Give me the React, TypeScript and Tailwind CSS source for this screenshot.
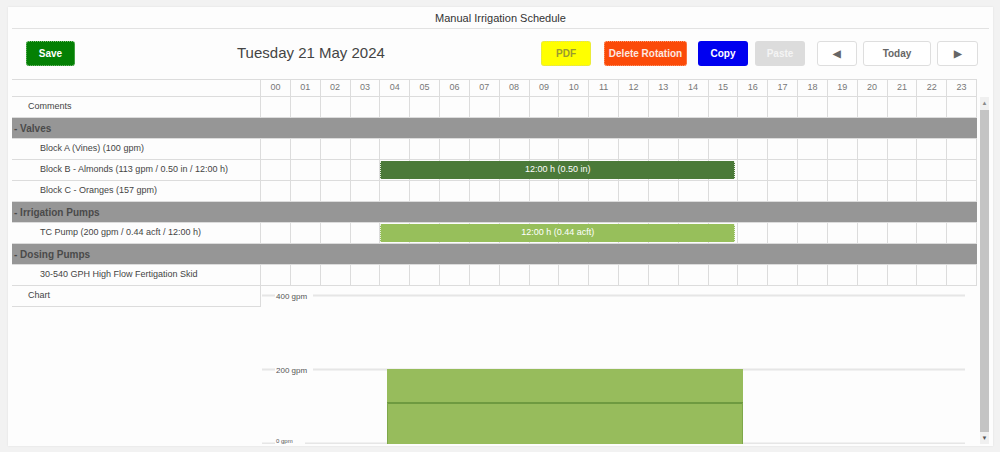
import React from "react";

type Row =
  | { kind: "group"; label: string }
  | { kind: "item"; label: string; indent: boolean; bar?: { text: string; tone: "dark" | "light" } };

const HOURS = Array.from({ length: 24 }, (_, i) => String(i).padStart(2, "0"));

const ROWS: Row[] = [
  { kind: "item", label: "Comments", indent: false },
  { kind: "group", label: "- Valves" },
  { kind: "item", label: "Block A (Vines) (100 gpm)", indent: true },
  {
    kind: "item",
    label: "Block B - Almonds (113 gpm / 0.50 in / 12:00 h)",
    indent: true,
    bar: { text: "12:00 h (0.50 in)", tone: "dark" },
  },
  { kind: "item", label: "Block C - Oranges (157 gpm)", indent: true },
  { kind: "group", label: "- Irrigation Pumps" },
  {
    kind: "item",
    label: "TC Pump (200 gpm / 0.44 acft / 12:00 h)",
    indent: true,
    bar: { text: "12:00 h (0.44 acft)", tone: "light" },
  },
  { kind: "group", label: "- Dosing Pumps" },
  { kind: "item", label: "30-540 GPH High Flow Fertigation Skid", indent: true },
];

const font = { fontFamily: '"Liberation Sans", Arial, sans-serif' };

const ToolButton: React.FC<{ className: string; children: React.ReactNode }> = ({ className, children }) => (
  <button
    className={`h-[25px] rounded-[3px] text-[10px] font-bold flex items-center justify-center ${className}`}
  >
    {children}
  </button>
);

const NavButton: React.FC<{ className: string; children: React.ReactNode }> = ({ className, children }) => (
  <button
    className={`h-[25px] rounded-[3px] border border-[#dedede] bg-white text-[#666] text-[10px] font-bold flex items-center justify-center ${className}`}
  >
    {children}
  </button>
);

const ScheduleRow: React.FC<{ row: Row }> = ({ row }) => {
  if (row.kind === "group") {
    return (
      <div className="h-[21px] bg-[#969696] border-b border-[#dcdcdc] flex items-center pl-[2px] text-[10px] font-bold text-[#4a4a4a]">
        {row.label}
      </div>
    );
  }
  return (
    <div className="grid grid-cols-[249px_repeat(24,minmax(0,1fr))] h-[21px] border-b border-[#dcdcdc]">
      <div
        className={`row-start-1 col-start-1 flex items-center border-r border-[#dcdcdc] text-[9px] text-[#444] ${
          row.indent ? "pl-[28px]" : "pl-[16px]"
        }`}
      >
        {row.label}
      </div>
      {HOURS.map((h, i) => (
        <div key={h} className="row-start-1 border-r border-[#dcdcdc]" style={{ gridColumn: i + 2 }} />
      ))}
      {row.bar && (
        <div
          className={`row-start-1 col-start-6 col-end-18 mr-[3px] my-[1px] flex items-center justify-center text-[9px] text-white border-x border-dotted border-[#e8f0e0] ${
            row.bar.tone === "dark" ? "bg-[#4b7a39]" : "bg-[#97bf5b]"
          }`}
        >
          {row.bar.text}
        </div>
      )}
    </div>
  );
};

const FlowChart: React.FC = () => (
  <svg width="716" height="158" className="block">
    <line x1="1" y1="9.5" x2="704" y2="9.5" stroke="#e6e6e6" strokeWidth="2" />
    <line x1="1" y1="83.5" x2="704" y2="83.5" stroke="#e6e6e6" strokeWidth="2" />
    <line x1="1" y1="157.5" x2="704" y2="157.5" stroke="#e6e6e6" strokeWidth="2" />
    <rect x="126" y="83" width="356" height="75" fill="#97bc5c" />
    <line x1="126" y1="117" x2="482" y2="117" stroke="#6e9a40" strokeWidth="2" />
    <line x1="126.5" y1="117" x2="126.5" y2="158" stroke="#7ea84a" strokeWidth="1" />
    <line x1="481.5" y1="117" x2="481.5" y2="158" stroke="#7ea84a" strokeWidth="1" />
    <rect x="14" y="4" width="38" height="11" fill="#fdfdfd" />
    <rect x="14" y="78" width="38" height="11" fill="#fdfdfd" />
    <rect x="14" y="152" width="30" height="6" fill="#fdfdfd" />
    <text x="15" y="12.5" fontSize="8" fill="#555" fontFamily='"Liberation Sans", Arial, sans-serif'>
      400 gpm
    </text>
    <text x="15" y="86.5" fontSize="8" fill="#555" fontFamily='"Liberation Sans", Arial, sans-serif'>
      200 gpm
    </text>
    <text x="15" y="157" fontSize="6" fill="#555" fontFamily='"Liberation Sans", Arial, sans-serif'>
      0 gpm
    </text>
  </svg>
);

export default function App() {
  return (
    <div className="w-[1000px] h-[452px] bg-[#f2f2f2] pt-[7px] pl-[8px] overflow-hidden" style={font}>
      <div className="w-[985px] h-[439px] bg-[#fdfdfd] shadow-[0_0_2px_rgba(0,0,0,0.08)] px-[4px] flex flex-col">
        {/* title */}
        <div className="h-[22px] border-b border-[#e2e2e2] flex items-end justify-center pb-[2px] text-[11px] text-[#333]">
          Manual Irrigation Schedule
        </div>

        {/* toolbar */}
        <div className="h-[50px] flex items-center pb-[1px]">
          <ToolButton className="ml-[14px] w-[49px] bg-[#048004] text-white border border-dotted border-[#7cc07c]">
            Save
          </ToolButton>
          <div className="ml-[162px] text-[15px] text-[#444]">Tuesday 21 May 2024</div>
          <div className="ml-auto mr-[11px] flex items-center">
            <ToolButton className="w-[50px] bg-[#ffff00] text-[#9a9a30] border border-dotted border-[#d8d870]">
              PDF
            </ToolButton>
            <ToolButton className="ml-[13px] w-[83px] bg-[#fb4a08] text-[#fde8e0] border border-dotted border-[#ff9a70]">
              Delete Rotation
            </ToolButton>
            <ToolButton className="ml-[11px] w-[50px] bg-[#0000f0] text-white">Copy</ToolButton>
            <ToolButton className="ml-[7px] w-[50px] bg-[#dcdcdc] text-[#f4f4f4]">Paste</ToolButton>
            <NavButton className="ml-[12px] w-[40px]">◀</NavButton>
            <NavButton className="ml-[6px] w-[68px]">Today</NavButton>
            <NavButton className="ml-[6px] w-[41px]">▶</NavButton>
          </div>
        </div>

        {/* hour header */}
        <div className="w-[965px] grid grid-cols-[249px_repeat(24,minmax(0,1fr))] h-[18px] border-y border-[#dcdcdc]">
          <div className="border-r border-[#dcdcdc]" />
          {HOURS.map((h) => (
            <div
              key={h}
              className="border-r border-[#dcdcdc] flex items-center justify-center text-[9px] text-[#777]"
            >
              {h}
            </div>
          ))}
        </div>

        {/* body */}
        <div className="flex flex-1 min-h-0">
          <div className="w-[965px] flex flex-col">
            {ROWS.map((row, i) => (
              <ScheduleRow key={i} row={row} />
            ))}
            <div className="flex">
              <div className="w-[249px]">
                <div className="h-[21px] border-r border-b border-[#dcdcdc] flex items-center pl-[16px] text-[9px] text-[#444]">
                  Chart
                </div>
              </div>
              <FlowChart />
            </div>
          </div>

          {/* scrollbar */}
          <div className="ml-[3px] w-[12px] h-[347px] bg-[#f0f0f0] flex flex-col items-center">
            <div className="h-[13px] flex items-center justify-center text-[6px] text-[#888]">▲</div>
            <div className="w-[9px] flex-1 bg-[#c4c4c4]" />
            <div className="h-[12px] flex items-center justify-center text-[6px] text-[#555]">▼</div>
          </div>
        </div>
      </div>
    </div>
  );
}
